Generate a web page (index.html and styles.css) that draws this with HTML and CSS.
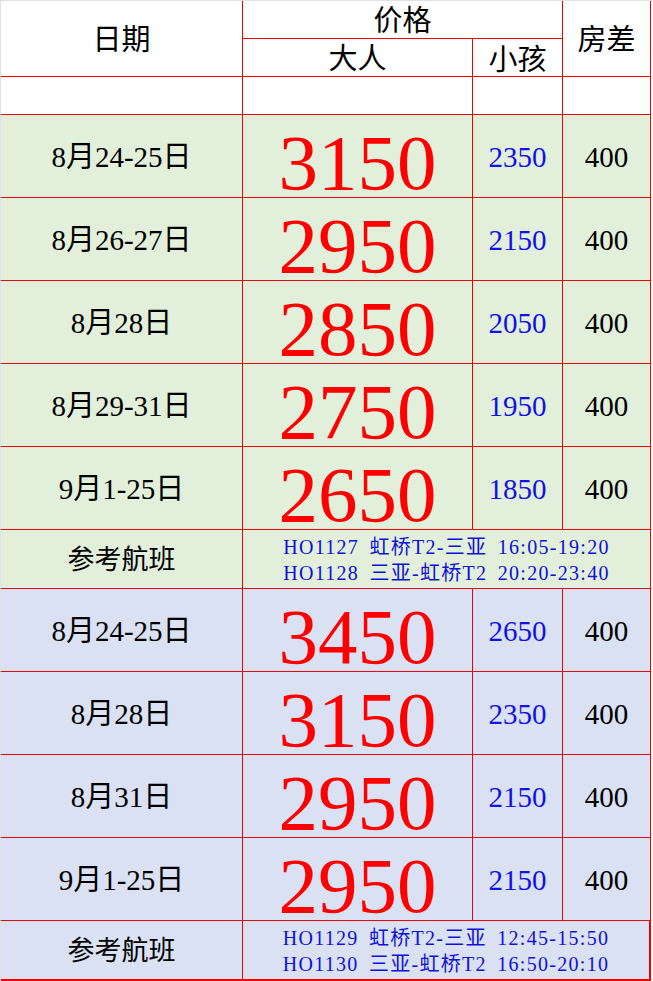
FILE: index.html
```html
<!DOCTYPE html>
<html lang="zh">
<head>
<meta charset="utf-8">
<link rel="stylesheet" href="styles.css">
</head>
<body>
<div class="page">
  <div class="sheet">
    <div class="cell head h-date">日期</div>
    <div class="cell head h-price">价格</div>
    <div class="cell head h-room">房差</div>
    <div class="cell head h-adult">大人</div>
    <div class="cell head h-kid">小孩</div>

    <div class="cell blank"></div>
    <div class="cell blank"></div>
    <div class="cell blank"></div>
    <div class="cell blank"></div>

    <div class="cell g date">8月24-25日</div>
    <div class="cell g big">3150</div>
    <div class="cell g kid">2350</div>
    <div class="cell g room">400</div>

    <div class="cell g date">8月26-27日</div>
    <div class="cell g big">2950</div>
    <div class="cell g kid">2150</div>
    <div class="cell g room">400</div>

    <div class="cell g date">8月28日</div>
    <div class="cell g big">2850</div>
    <div class="cell g kid">2050</div>
    <div class="cell g room">400</div>

    <div class="cell g date">8月29-31日</div>
    <div class="cell g big">2750</div>
    <div class="cell g kid">1950</div>
    <div class="cell g room">400</div>

    <div class="cell g date">9月1-25日</div>
    <div class="cell g big">2650</div>
    <div class="cell g kid">1850</div>
    <div class="cell g room">400</div>

    <div class="cell g ref">参考航班</div>
    <div class="cell g flight">
      <div class="fl">HO1127 虹桥T2-三亚 16:05-19:20</div>
      <div class="fl">HO1128 三亚-虹桥T2 20:20-23:40</div>
    </div>

    <div class="cell b date">8月24-25日</div>
    <div class="cell b big">3450</div>
    <div class="cell b kid">2650</div>
    <div class="cell b room">400</div>

    <div class="cell b date">8月28日</div>
    <div class="cell b big">3150</div>
    <div class="cell b kid">2350</div>
    <div class="cell b room">400</div>

    <div class="cell b date">8月31日</div>
    <div class="cell b big">2950</div>
    <div class="cell b kid">2150</div>
    <div class="cell b room">400</div>

    <div class="cell b date">9月1-25日</div>
    <div class="cell b big">2950</div>
    <div class="cell b kid">2150</div>
    <div class="cell b room">400</div>

    <div class="cell b ref last">参考航班</div>
    <div class="cell b flight last lastr">
      <div class="fl">HO1129 虹桥T2-三亚 12:45-15:50</div>
      <div class="fl">HO1130 三亚-虹桥T2 16:50-20:10</div>
    </div>
  </div>
</div>
</body>
</html>
```

FILE: styles.css
```css
html, body {
  margin: 0;
  padding: 0;
  background: #ffffff;
}

.page {
  width: 653px;
  height: 981px;
  box-sizing: border-box;
  border-top: 1px solid #e2e2e2;
  border-left: 1px solid #e2e2e2;
  overflow: hidden;
}

.sheet {
  display: grid;
  grid-template-columns: 242px 230px 90px 88px;
  grid-template-rows: 38px 38px 38px 83px 83px 83px 83px 83px 59px 83px 83px 83px 83px 60px;
  font-family: "Liberation Serif", "Noto Sans CJK SC", serif;
  color: #000;
}

.cell {
  box-sizing: border-box;
  border-right: 1px solid #f20000;
  border-bottom: 1px solid #f20000;
  display: flex;
  align-items: center;
  justify-content: center;
  white-space: nowrap;
}

.head {
  font-size: 29px;
  line-height: 1;
}

.h-date { grid-column: 1; grid-row: 1 / 3; padding-top: 4px; }
.h-price { grid-column: 2 / 4; grid-row: 1; padding-top: 4px; }
.h-room { grid-column: 4; grid-row: 1 / 3; padding-top: 4px; }
.h-adult { grid-column: 2; grid-row: 2; padding-top: 4px; }
.h-kid { grid-column: 3; grid-row: 2; padding-top: 6px; }

.g { background: #e2efda; }
.b { background: #d9e1f2; }

.date {
  font-size: 29px;
  line-height: 1;
  padding-top: 3px;
}

.big {
  font-size: 79px;
  line-height: 1;
  color: #ff0000;
  padding-top: 12px;
}

.kid {
  font-size: 29px;
  line-height: 1;
  color: #1212e6;
  padding-top: 3px;
}

.room {
  font-size: 29px;
  line-height: 1;
  padding-top: 3px;
}

.ref {
  font-size: 27px;
  line-height: 1;
  padding-top: 2px;
}

.flight {
  grid-column: 2 / 5;
  flex-direction: column;
  font-size: 20px;
  line-height: 26px;
  letter-spacing: 1.3px;
  word-spacing: 4px;
  color: #1010d8;
  padding-top: 1px;
}

.last {
  border-bottom: 2px solid #f20000;
}

.lastr {
  border-right: 2px solid #f20000;
}
```
